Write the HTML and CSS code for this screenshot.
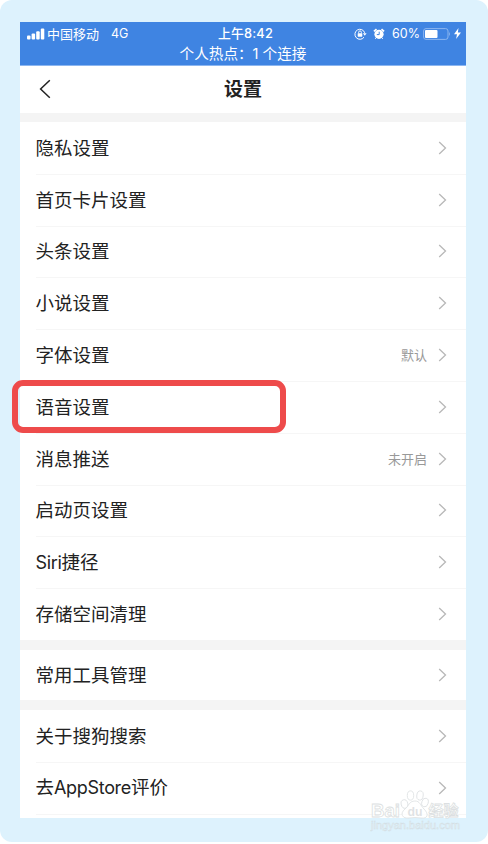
FILE: index.html
```html
<!DOCTYPE html>
<html lang="zh-CN">

<head>
    <meta charset="UTF-8">
    <meta name="viewport" content="width=device-width, initial-scale=1">
    <title>设置</title>
    <link rel="stylesheet" href="styles.css">
</head>

<body>
    <svg class="symbols" width="0" height="0">
        <symbol id="chevron" viewBox="0 0 9 14">
            <path d="M1.2 1 L7.5 7 L1.2 13" fill="none" stroke="currentColor" stroke-width="1.3" />
        </symbol>
    </svg>

    <div class="frame">
        <div class="phone">
            <div class="status-bar">
                <div class="status-row">
                    <div class="status-left">
                        <svg class="signal" width="18" height="12" viewBox="0 0 18 12" fill="#fff">
                            <rect x="0" y="7.5" width="3.5" height="4" rx="1" />
                            <rect x="4.6" y="5.5" width="3.5" height="6" rx="1" />
                            <rect x="9.2" y="3.3" width="3.5" height="8.2" rx="1" />
                            <rect x="13.8" y=".5" width="3.5" height="11" rx="1" />
                        </svg>
                        <span class="carrier">中国移动</span>
                        <span class="network">4G</span>
                    </div>
                    <span class="time">上午8:42</span>
                    <div class="status-right">
                        <svg width="13" height="12" viewBox="0 0 13 12">
                            <path d="M10 9.2 A5 5 0 1 1 10.7 4.8" fill="none" stroke="#fff" stroke-width="1" />
                            <path d="M8.9 5.2 H12.6 L10.8 7.8 Z" fill="#fff" />
                            <rect x="3.7" y="5.2" width="4.6" height="3.5" rx=".4" fill="#fff" />
                            <path d="M4.6 5.3 V4.3 a1.4 1.4 0 0 1 2.8 0 V5.3" fill="none" stroke="#fff" stroke-width=".9" />
                        </svg>
                        <svg class="alarm" width="12" height="12" viewBox="0 0 12 12">
                            <circle cx="6" cy="6.3" r="4.6" fill="#fff" />
                            <path d="M.9 3.4 L3.5 1.1 M11.1 3.4 L8.5 1.1" stroke="#fff" stroke-width="1.6" />
                            <path d="M2.2 10.8 L3.3 9.7 M9.8 10.8 L8.7 9.7" stroke="#fff" stroke-width="1" />
                            <path d="M6.2 3.7 V6.6 H3.8" fill="none" stroke="#3f84e2" stroke-width="1" />
                        </svg>
                        <span class="percent">60%</span>
                        <svg class="battery" width="28" height="12" viewBox="0 0 28 12">
                            <rect x=".6" y=".6" width="24.4" height="10.8" rx="2.4" fill="none" stroke="#8cb6ef" stroke-width="1" />
                            <rect x="2" y="2" width="12.5" height="8" rx="1" fill="#fff" />
                            <path d="M26.1 4 Q28 6 26.1 8 Z" fill="#8cb6ef" />
                        </svg>
                        <svg class="bolt" width="7" height="11" viewBox="0 0 7 11">
                            <path d="M4.5 0 L0 6.2 H3 L2.1 11 L7 4.5 H3.9 Z" fill="#fff" />
                        </svg>
                    </div>
                </div>
                <div class="hotspot">个人热点：1 个连接</div>
            </div>

            <div class="header">
                <svg class="back" width="12" height="20" viewBox="0 0 12 20">
                    <path d="M10.8 1.2 L1.6 10 L10.8 18.8" fill="none" stroke="#222" stroke-width="1.5" />
                </svg>
                <h1>设置</h1>
            </div>

            <ul class="group first">
                <li><span>隐私设置</span><svg class="arrow"><use href="#chevron" /></svg></li>
                <li><span>首页卡片设置</span><svg class="arrow"><use href="#chevron" /></svg></li>
                <li><span>头条设置</span><svg class="arrow"><use href="#chevron" /></svg></li>
                <li><span>小说设置</span><svg class="arrow"><use href="#chevron" /></svg></li>
                <li><span>字体设置</span><em>默认</em><svg class="arrow"><use href="#chevron" /></svg></li>
                <li class="marked"><span>语音设置</span><svg class="arrow"><use href="#chevron" /></svg></li>
                <li><span>消息推送</span><em>未开启</em><svg class="arrow"><use href="#chevron" /></svg></li>
                <li><span>启动页设置</span><svg class="arrow"><use href="#chevron" /></svg></li>
                <li><span><b>Siri</b>捷径</span><svg class="arrow"><use href="#chevron" /></svg></li>
                <li><span>存储空间清理</span><svg class="arrow"><use href="#chevron" /></svg></li>
            </ul>

            <ul class="group single">
                <li><span>常用工具管理</span><svg class="arrow"><use href="#chevron" /></svg></li>
            </ul>

            <ul class="group last">
                <li><span>关于搜狗搜索</span><svg class="arrow"><use href="#chevron" /></svg></li>
                <li><span>去<b>AppStore</b>评价</span><svg class="arrow"><use href="#chevron" /></svg></li>
            </ul>
        </div>

        <!-- watermark -->
        <svg class="watermark" width="96" height="46" viewBox="0 0 96 46">
            <g class="wm-logo">
                <text x="1" y="29" font-size="19" textLength="29" lengthAdjust="spacingAndGlyphs">Bai</text>
                <ellipse cx="34.5" cy="16" rx="3.3" ry="4.3" transform="rotate(-15 34.5 16)" />
                <ellipse cx="40.5" cy="7.5" rx="3.2" ry="4.6" />
                <ellipse cx="50" cy="7.5" rx="3.2" ry="4.6" transform="rotate(8 50 7.5)" />
                <ellipse cx="55" cy="14.5" rx="3.2" ry="4.4" transform="rotate(15 55 14.5)" />
                <path d="M45 13 C39 13 39 18 35 21 C29 26 33 31 39 30 Q45 29 51 30 C58 31 59 26 54 21 C50 17 50 13 45 13 Z" />
                <text class="wm-du" x="37.5" y="27.5" font-size="12.5" textLength="15" lengthAdjust="spacingAndGlyphs">du</text>
                <text x="58.5" y="28" font-size="15">经验</text>
            </g>
            <text class="wm-url" x="1" y="41" font-size="10" textLength="89" lengthAdjust="spacingAndGlyphs">jingyan.baidu.com</text>
        </svg>
    </div>
</body>

</html>
```
FILE: styles.css
```css
* {
    margin: 0;
    padding: 0;
    box-sizing: border-box;
}

body {
    background: #fff;
    color: #222;
    font-family: Inter, "Noto Sans CJK SC", sans-serif;
}

.symbols {
    position: absolute;
}

.frame {
    position: relative;
    height: 842px;
    padding: 22px 22px 24px 20px;
    border-radius: 12px;
    background: #ddf2fd;
}

.phone {
    height: 796px;
    background: #fff;
}

/* Status bar */
.status-bar {
    height: 44px;
    border-bottom: 1px solid #8cb6f0;
    background: #3f84e2;
    color: #fff;
}

.status-row {
    display: grid;
    grid-template-columns: 1fr auto 1fr;
    align-items: center;
    height: 23px;
    padding: 0 5px 0 7px;
    font-size: 13px;
    line-height: 22px;
}

.status-left,
.status-right {
    display: flex;
    align-items: center;
}

.status-right {
    justify-content: flex-end;
}

.carrier {
    margin-left: 2px;
}

.network {
    margin-left: 12px;
    font-size: 12.5px;
}

.time {
    margin-left: 3px;
    font-size: 12.8px;
    font-weight: 500;
    letter-spacing: .2px;
}

.alarm {
    margin-left: 6px;
}

.percent {
    margin-left: 7px;
    font-size: 12.5px;
}

.battery {
    margin-left: 3px;
}

.bolt {
    margin-left: 3px;
}

.hotspot {
    font-size: 14.6px;
    line-height: 18px;
    text-align: center;
}

/* Title */
.header {
    position: relative;
    height: 47px;
    text-align: center;
}

.header h1 {
    font-size: 19px;
    font-weight: 700;
    line-height: 48px;
}

.back {
    position: absolute;
    top: 13px;
    left: 19px;
}

/* Settings list */
.group {
    border-top: 10px solid #f4f4f4;
    list-style: none;
}

.first {
    border-top-width: 9px;
}

.group li {
    position: relative;
    display: flex;
    align-items: center;
    height: 51.8px;
    padding: 0 19px 0 15.4px;
    font-size: 18.5px;
    line-height: 28px;
}

.group li + li::before,
.last::after {
    content: "";
    position: absolute;
    top: 0;
    right: 0;
    left: 16px;
    height: 1px;
    background: #f6f6f6;
}

.last::after {
    position: static;
    display: block;
    margin-left: 16px;
}

.single li {
    height: 50.3px;
}

.group b {
    font-size: 18px;
    font-weight: 400;
    letter-spacing: -.3px;
}

.group em {
    margin-left: auto;
    color: #999;
    font-size: 13px;
    font-style: normal;
}

.arrow {
    width: 9px;
    height: 14px;
    margin-left: auto;
    color: #b8b8b8;
}

em + .arrow {
    margin-left: 11px;
}

/* Red frame round the highlighted row */
.marked::after {
    content: "";
    position: absolute;
    top: -1px;
    left: -8px;
    box-sizing: border-box;
    width: 274px;
    height: 53px;
    border: 6px solid #ee4b4b;
    border-radius: 11px;
}

.watermark {
    position: absolute;
    top: 788px;
    left: 370px;
    font-family: "Liberation Sans", "Noto Sans CJK SC", sans-serif;
}

.wm-logo {
    fill: #fff;
    fill-opacity: .75;
    stroke: #dcdfe1;
    stroke-width: .8;
    font-weight: 700;
}

.wm-du {
    fill: #d6d9db;
    stroke: none;
}

.wm-url {
    fill: #eff5f8;
    stroke: #cfdce3;
    stroke-width: .4;
}
```
